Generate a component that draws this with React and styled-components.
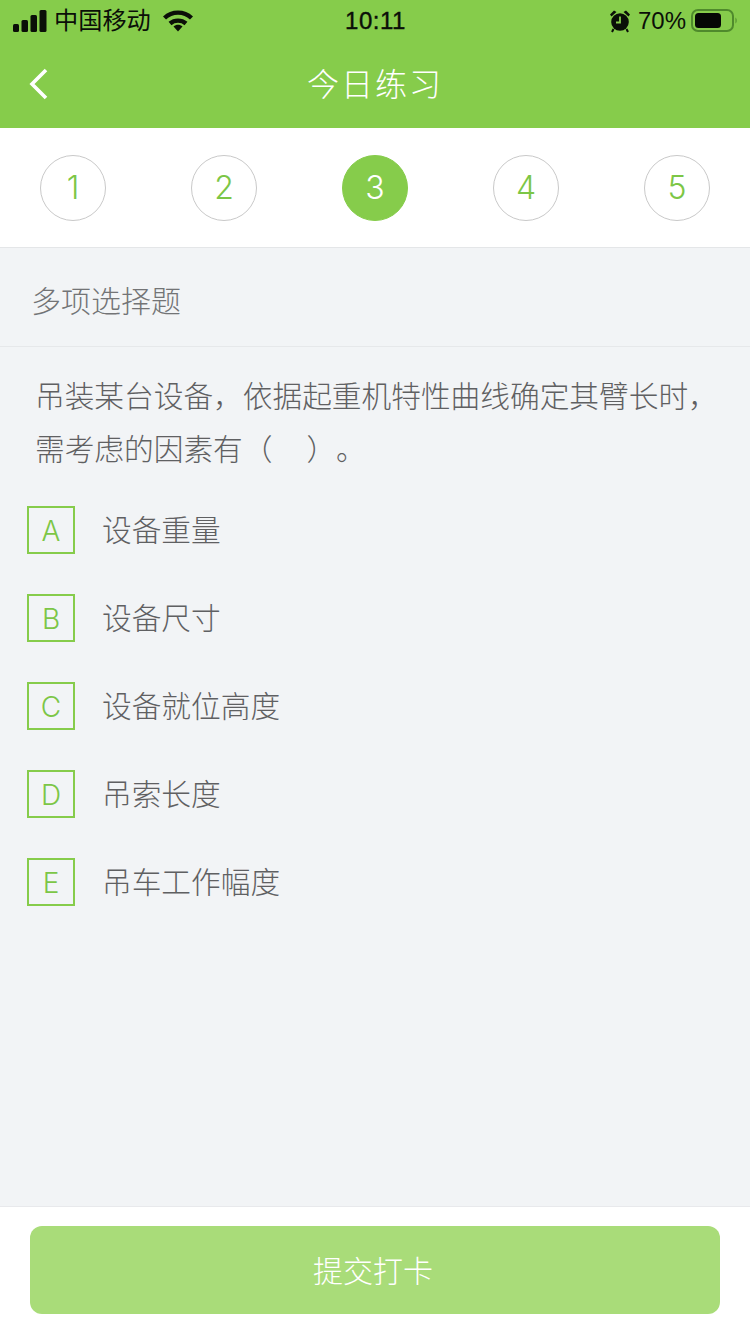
import React from "react";
import styled, { createGlobalStyle } from "styled-components";

const SANS = `"Liberation Sans", "Noto Sans CJK SC", sans-serif`;
const LIGHT = `Inter, "Noto Sans CJK SC", sans-serif`;
const GREEN = "#86cc4b";

const Global = createGlobalStyle`
  html, body { margin: 0; padding: 0; background: #f2f4f6; }
  * { box-sizing: border-box; }
`;

const Page = styled.div`
  width: 750px;
  height: 1334px;
  display: flex;
  flex-direction: column;
  font-family: ${SANS};
  background: #f2f4f6;
  overflow: hidden;
  text-spacing-trim: space-all;
`;

const Header = styled.header`
  height: 128px;
  flex: none;
  background: ${GREEN};
  display: flex;
  flex-direction: column;
`;

const StatusBar = styled.div`
  height: 42px;
  padding: 0 12px 0 13px;
  display: grid;
  grid-template-columns: 1fr auto 1fr;
  align-items: center;
  color: #0b0f08;
`;

const StatusLeft = styled.div`
  display: flex;
  align-items: center;
  gap: 7px;
`;

const Carrier = styled.span`
  font-size: 24.2px;
  line-height: 40px;
  margin-right: 5px;
`;

const Clock = styled.span`
  font-size: 24px;
  font-weight: 400;
  letter-spacing: 0.5px;
  -webkit-text-stroke: 0.4px #0b0f08;
`;

const StatusRight = styled.div`
  display: flex;
  align-items: center;
  justify-content: flex-end;
  gap: 7px;
`;

const Percent = styled.span`
  font-size: 24px;
  margin-right: -2px;
`;

const NavBar = styled.div`
  position: relative;
  flex: 1;
  display: flex;
  align-items: center;
  justify-content: center;
  padding-bottom: 6px;
`;

const BackButton = styled.button`
  position: absolute;
  left: 28px;
  top: 26px;
  width: 22px;
  height: 32px;
  padding: 0;
  border: 0;
  background: none;
  display: flex;
`;

const Title = styled.h1`
  margin: 0;
  font-size: 32px;
  font-weight: 300;
  color: #fff;
  letter-spacing: 2px;
`;

const Steps = styled.nav`
  height: 120px;
  flex: none;
  padding: 0 40px;
  background: #fff;
  border-bottom: 1px solid #e4e6e8;
  display: flex;
  align-items: center;
  justify-content: space-between;
`;

const Step = styled.div`
  width: 66px;
  height: 66px;
  border-radius: 50%;
  display: flex;
  align-items: center;
  justify-content: center;
  font-family: ${LIGHT};
  font-weight: 300;
  font-size: 32px;
  color: ${(p) => (p.$active ? "#fff" : "#7cc646")};
  background: ${(p) => (p.$active ? GREEN : "#fff")};
  border: 1px solid ${(p) => (p.$active ? GREEN : "#c9c9c9")};
`;

const TypeRow = styled.div`
  height: 99px;
  flex: none;
  padding: 4px 31px 0;
  display: flex;
  align-items: center;
  font-size: 30px;
  font-weight: 300;
  color: #737476;
  border-bottom: 1px solid #e6e8ea;
`;

const Content = styled.main`
  flex: 1;
  padding: 23px 28px 0 35px;
`;

const Question = styled.p`
  margin: 0 0 30px;
  font-size: 29.7px;
  font-weight: 300;
  line-height: 53px;
  word-spacing: -4px;
  color: #5f6062;
`;

const Options = styled.ul`
  list-style: none;
  margin: 0 0 0 -8px;
  padding: 0;
  display: flex;
  flex-direction: column;
  gap: 40px;
`;

const Option = styled.li`
  display: flex;
  align-items: center;
  gap: 27px;
  height: 48px;
`;

const Letter = styled.span`
  width: 48px;
  height: 48px;
  flex: none;
  border: 2px solid ${GREEN};
  display: flex;
  align-items: center;
  justify-content: center;
  padding-top: 2px;
  font-family: ${LIGHT};
  font-weight: 300;
  font-size: 28px;
  color: #7cc646;
`;

const OptionText = styled.span`
  font-size: 29.7px;
  font-weight: 300;
  color: #5f6062;
  position: relative;
  top: -2px;
`;

const Footer = styled.footer`
  height: 128px;
  flex: none;
  padding: 19px 30px 0;
  background: #fff;
  border-top: 1px solid #e8e9ec;
`;

const Submit = styled.button`
  width: 690px;
  height: 88px;
  border: 0;
  border-radius: 12px;
  background: #a9dc79;
  color: #fff;
  font-family: inherit;
  font-size: 30px;
  font-weight: 300;
  padding: 0 4px 2px 0;
`;

const Signal = () => (
  <svg width="34" height="22" viewBox="0 0 34 22" fill="#0b0f08">
    <rect x="0" y="14" width="6" height="8" rx="1.5" />
    <rect x="8.5" y="10" width="6.5" height="12" rx="1.5" />
    <rect x="17.5" y="5" width="6.5" height="17" rx="1.5" />
    <rect x="26.5" y="0" width="7" height="22" rx="1.5" />
  </svg>
);

const Wifi = () => (
  <svg width="30" height="22" viewBox="0 0 30 22" fill="none" stroke="#0b0f08" strokeWidth="4.4">
    <path d="M1.5 8 C9 0.8 21 0.8 28.5 8" />
    <path d="M7 13.5 C11.5 9.6 18.5 9.6 23 13.5" />
    <path d="M10.5 16.5 L15 21.5 L19.5 16.5 C17 14.2 13 14.2 10.5 16.5Z" fill="#0b0f08" stroke="none" />
  </svg>
);

const Alarm = () => (
  <svg width="22" height="24" viewBox="0 0 22 24">
    <circle cx="11" cy="13" r="8.8" fill="#0b0f08" />
    <path d="M1 5.5 L5 1.5 L7.5 3 L2.5 7.5Z M21 5.5 L17 1.5 L14.5 3 L19.5 7.5Z" fill="#0b0f08" />
    <path d="M4.5 20 L3 23 M17.5 20 L19 23" stroke="#0b0f08" strokeWidth="2" />
    <path d="M11 7.5 V13.5 H7" fill="none" stroke={GREEN} strokeWidth="1.8" />
  </svg>
);

const Battery = () => (
  <svg width="47" height="24" viewBox="0 0 47 24">
    <rect x="1" y="1" width="41" height="21" rx="6" fill="none" stroke="#4f8a2c" strokeWidth="2" />
    <rect x="4" y="4" width="26" height="15" rx="3.5" fill="#050705" />
    <path d="M44.5 8.5 C46 9.5 46 13.5 44.5 14.5Z" fill="#4f8a2c" />
  </svg>
);

const Chevron = () => (
  <svg width="22" height="32" viewBox="0 0 22 32" fill="none" stroke="#fff" strokeWidth="3.6">
    <path d="M18 2 L4 16 L18 30" />
  </svg>
);

const STEPS = [1, 2, 3, 4, 5];
const OPTIONS = [
  ["A", "设备重量"],
  ["B", "设备尺寸"],
  ["C", "设备就位高度"],
  ["D", "吊索长度"],
  ["E", "吊车工作幅度"],
];

export default function App() {
  return (
    <Page>
      <Global />
      <Header>
        <StatusBar>
          <StatusLeft>
            <Signal />
            <Carrier>中国移动</Carrier>
            <Wifi />
          </StatusLeft>
          <Clock>10:11</Clock>
          <StatusRight>
            <Alarm />
            <Percent>70%</Percent>
            <Battery />
          </StatusRight>
        </StatusBar>
        <NavBar>
          <BackButton aria-label="返回">
            <Chevron />
          </BackButton>
          <Title>今日练习</Title>
        </NavBar>
      </Header>
      <Steps>
        {STEPS.map((n) => (
          <Step key={n} $active={n === 3}>
            {n}
          </Step>
        ))}
      </Steps>
      <TypeRow>多项选择题</TypeRow>
      <Content>
        <Question>
          吊装某台设备，依据起重机特性曲线确定其臂长时，需考虑的因素有（　 ）。
        </Question>
        <Options>
          {OPTIONS.map(([letter, text]) => (
            <Option key={letter}>
              <Letter>{letter}</Letter>
              <OptionText>{text}</OptionText>
            </Option>
          ))}
        </Options>
      </Content>
      <Footer>
        <Submit>提交打卡</Submit>
      </Footer>
    </Page>
  );
}
